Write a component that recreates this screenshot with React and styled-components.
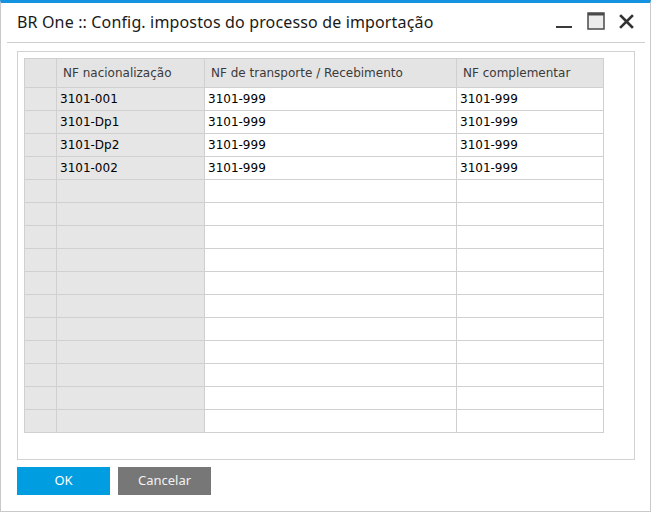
import React from "react";
import styled, { createGlobalStyle } from "styled-components";

const Global = createGlobalStyle`
  html, body { margin: 0; padding: 0; background: #ffffff; }
  body { font-family: "DejaVu Sans", sans-serif; }
`;

const Window = styled.div`
  box-sizing: border-box;
  width: 651px;
  height: 512px;
  background: #ffffff;
  border-top: 3px solid #1592e0;
  border-left: 1px solid #c9c9c9;
  border-right: 1px solid #c9c9c9;
  border-bottom: 1px solid #c9c9c9;
  display: flex;
  flex-direction: column;
`;

const TitleBar = styled.div`
  height: 39px;
  display: flex;
  align-items: center;
  justify-content: space-between;
  padding: 0 16px 0 16px;
`;

const Title = styled.div`
  font-family: "Noto Sans", "Open Sans", sans-serif;
  font-size: 16px;
  color: #1a1a1a;
  margin-top: -1px;
  letter-spacing: 0.15px;
`;

const Controls = styled.div`
  display: flex;
  align-items: center;
  gap: 14px;
  margin-top: -3px;
`;

const Separator = styled.div`
  height: 1px;
  background: #cfcfcf;
  margin: 0 5px 0 6px;
`;

const Panel = styled.div`
  box-sizing: border-box;
  margin: 8px 0 0 16px;
  width: 618px;
  height: 409px;
  border: 1px solid #d2d2d2;
  padding: 6px 0 0 6px;
`;

const Grid = styled.div`
  display: grid;
  grid-template-columns: 32px 148px 252px 147px;
  grid-auto-rows: 23px;
  grid-template-rows: 29px;
  border-top: 1px solid #d0d0d0;
  border-left: 1px solid #d0d0d0;
  width: 580px;
  box-sizing: border-box;
`;

const Cell = styled.div`
  box-sizing: border-box;
  border-right: 1px solid #d0d0d0;
  border-bottom: 1px solid #d0d0d0;
  background: ${(p) => (p.$gray ? "#e6e6e6" : "#ffffff")};
  font-family: "DejaVu Sans", "Liberation Sans", sans-serif;
  font-size: 12px;
  color: #000;
  padding-left: 3px;
  display: flex;
  align-items: center;
  white-space: nowrap;
  overflow: hidden;
`;

const HeadCell = styled(Cell)`
  background: #e4e4e4;
  color: #3a3a3a;
  padding-left: 6px;
  padding-bottom: 1px;
`;

const Footer = styled.div`
  display: flex;
  gap: 8px;
  margin: 7px 0 0 16px;
`;

const Button = styled.button`
  width: 93px;
  height: 28px;
  border: none;
  margin: 0;
  padding: 0 0 3px 0;
  background: ${(p) => (p.$primary ? "#009de0" : "#777777")};
  color: ${(p) => (p.$primary ? "#ffffff" : "#f2f2f2")};
  font-family: "Noto Sans", "Open Sans", sans-serif;
  font-size: 13px;
  cursor: pointer;
`;

const Icon = styled.svg`
  display: block;
`;

const rows = [
  ["3101-001", "3101-999", "3101-999"],
  ["3101-Dp1", "3101-999", "3101-999"],
  ["3101-Dp2", "3101-999", "3101-999"],
  ["3101-002", "3101-999", "3101-999"],
];
const emptyCount = 11;

export default function App() {
  const allRows = [...rows, ...Array.from({ length: emptyCount }, () => ["", "", ""])];
  return (
    <>
      <Global />
      <Window>
        <TitleBar>
          <Title>BR One :: Config. impostos do processo de importação</Title>
          <Controls>
            <Icon width="17" height="18" viewBox="0 0 17 18">
              <rect x="0" y="14" width="16" height="2" fill="#3a3a3a" />
            </Icon>
            <Icon width="18" height="18" viewBox="0 0 18 18">
              <rect x="1" y="1" width="16" height="16" fill="#ececec" stroke="#4a4a4a" strokeWidth="1.5" />
              <rect x="1" y="1" width="16" height="2.5" fill="#4a4a4a" />
            </Icon>
            <Icon width="15" height="15" viewBox="0 0 15 15">
              <path d="M2 2 L13 13 M13 2 L2 13" stroke="#333" strokeWidth="2.6" strokeLinecap="square" />
            </Icon>
          </Controls>
        </TitleBar>
        <Separator />
        <Panel>
          <Grid>
            <HeadCell />
            <HeadCell>NF nacionalização</HeadCell>
            <HeadCell>NF de transporte / Recebimento</HeadCell>
            <HeadCell>NF complementar</HeadCell>
            {allRows.map((r, i) => (
              <React.Fragment key={i}>
                <Cell $gray />
                <Cell $gray>{r[0]}</Cell>
                <Cell>{r[1]}</Cell>
                <Cell>{r[2]}</Cell>
              </React.Fragment>
            ))}
          </Grid>
        </Panel>
        <Footer>
          <Button $primary>OK</Button>
          <Button>Cancelar</Button>
        </Footer>
      </Window>
    </>
  );
}
